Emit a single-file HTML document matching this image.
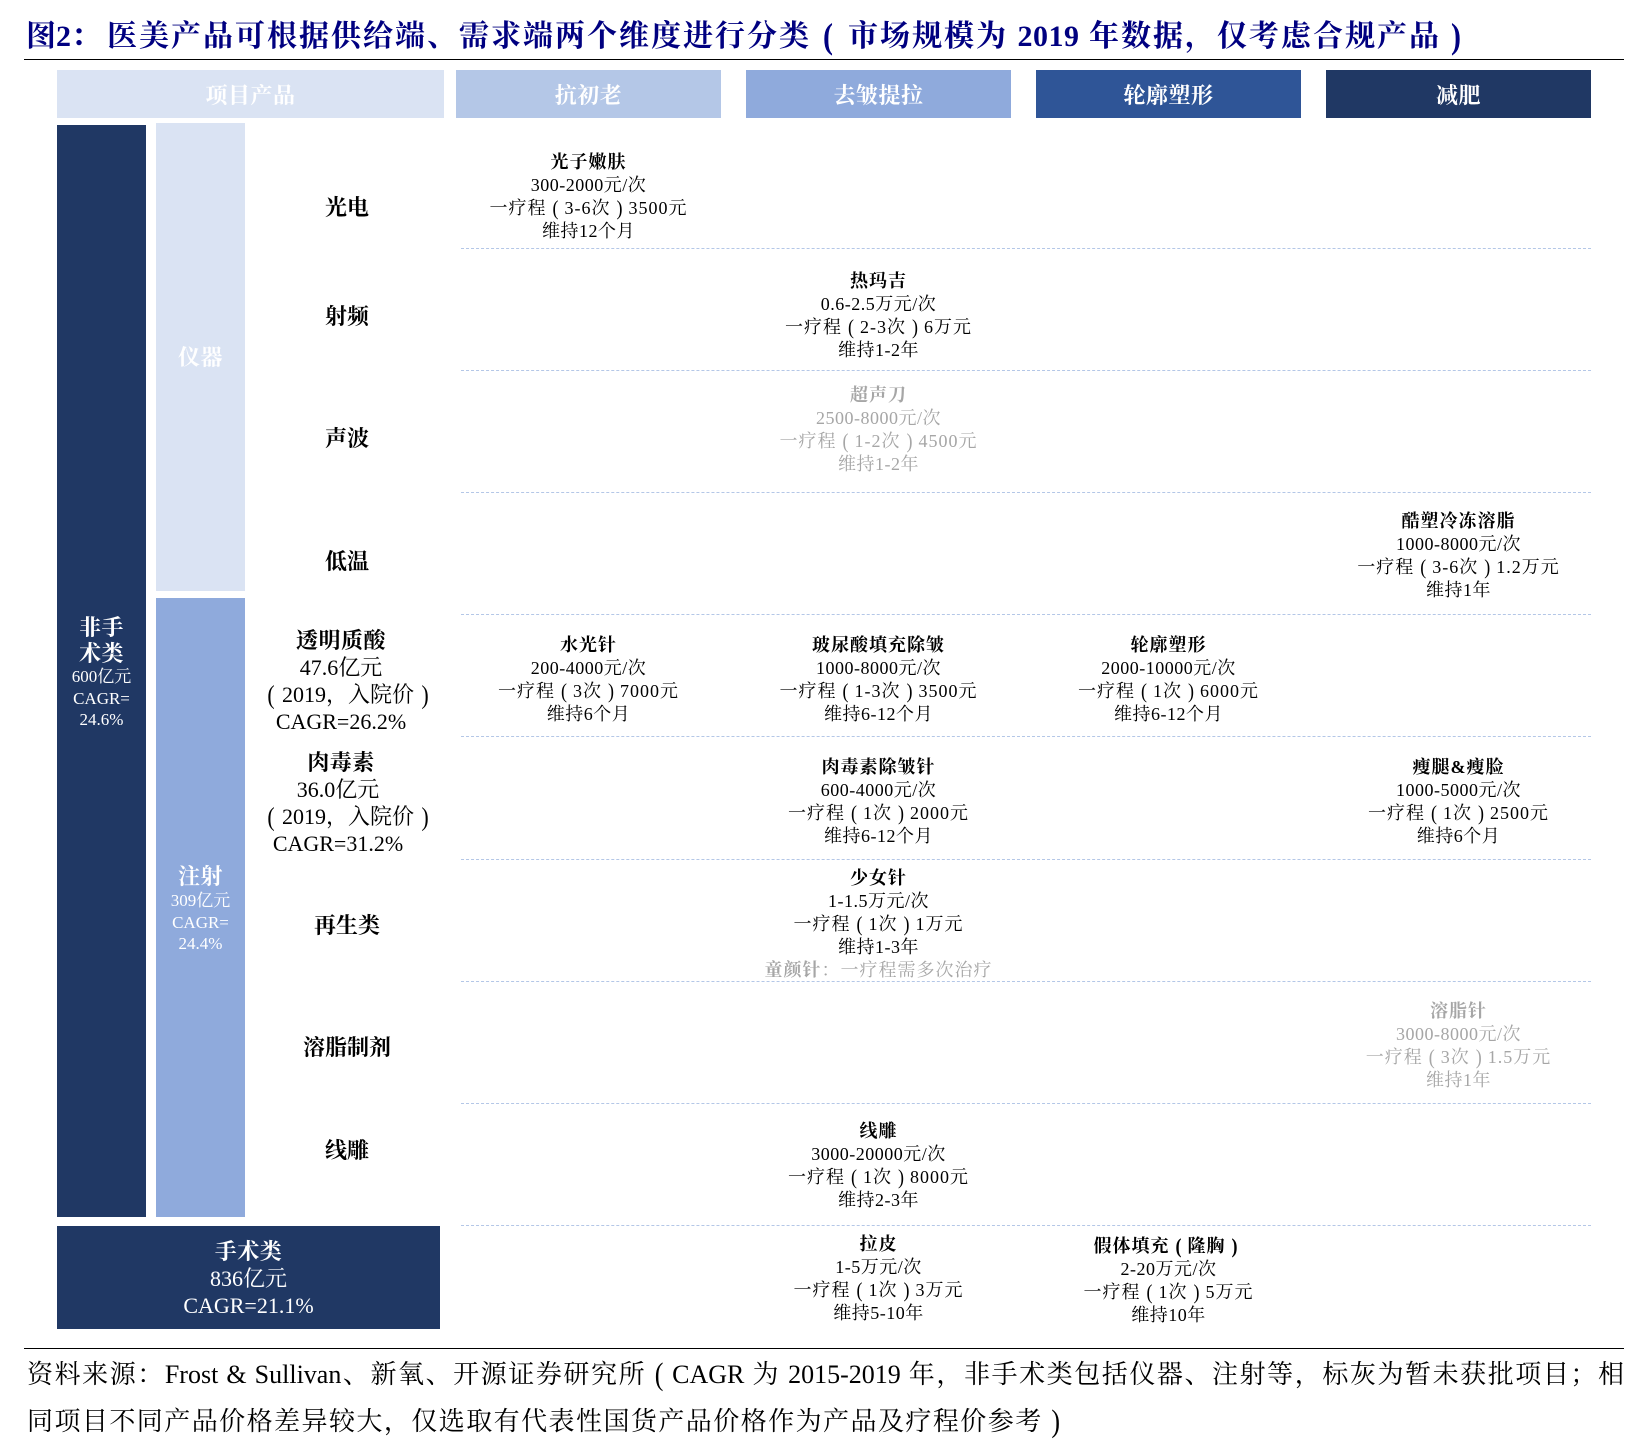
<!DOCTYPE html>
<html lang="zh-CN">
<head>
<meta charset="utf-8">
<title>医美产品分类</title>
<style>
html,body{margin:0;padding:0;background:#fff;}
#p{position:relative;width:1648px;height:1443px;overflow:hidden;background:#fff;color:#000;
font-family:"Liberation Serif","Noto Serif CJK SC",serif;}
#p div{position:absolute;}
.hd{top:72px;height:48px;line-height:48px;text-align:center;color:#fff;font-weight:bold;font-size:22px;letter-spacing:.5px;}
.dl{left:461px;width:1130px;height:0;border-top:1px dashed #B4C7E7;}
.c{width:265px;text-align:center;font-size:18px;line-height:23px;letter-spacing:.5px;white-space:nowrap;}
.c b{font-weight:bold;letter-spacing:1px;}
.c em{font-style:normal;letter-spacing:1px;}
.g{color:#A6A6A6;}
.l{left:247px;width:200px;text-align:center;font-size:22px;font-weight:bold;line-height:28px;white-space:nowrap;}
.k{text-align:center;white-space:nowrap;font-size:22px;line-height:27px;}
.k b{font-weight:bold;letter-spacing:.5px;}
.w{color:#fff;}
.s{font-size:17px;line-height:21.5px;}
.t{white-space:nowrap;}
i{font-style:normal;display:inline-block;width:1em;text-align:center;text-align-last:center;letter-spacing:0;transform:scaleY(1.2);}
.o{position:relative;}
</style>
</head>
<body>
<div id="p">
<div class="t" style="left:26px;top:17px;font-size:30px;line-height:40px;font-weight:bold;color:#000080;">图2：</div>
<div class="t" style="left:107px;top:17px;font-size:30px;line-height:40px;font-weight:bold;color:#000080;letter-spacing:2px;">医美产品可根据供给端、需求端两个维度进行分类<i style="margin-left:2px;margin-right:5px;">(</i>市场规模为 <span style="letter-spacing:.5px;">2019</span> 年数据，仅考虑合规产品<i>)</i></div>
<div style="left:24px;top:59px;width:1600px;height:1px;background:#000;"></div>

<div style="left:57px;top:70px;width:387px;height:48px;background:#DAE3F3;"></div>
<div style="left:456px;top:70px;width:265px;height:48px;background:#B4C7E7;"></div>
<div style="left:746px;top:70px;width:265px;height:48px;background:#8FAADC;"></div>
<div style="left:1036px;top:70px;width:265px;height:48px;background:#2F5597;"></div>
<div style="left:1326px;top:70px;width:265px;height:48px;background:#203864;"></div>
<div class="hd" style="left:57px;width:387px;">项目产品</div>
<div class="hd" style="left:456px;width:265px;">抗初老</div>
<div class="hd" style="left:746px;width:265px;">去皱提拉</div>
<div class="hd" style="left:1036px;width:265px;">轮廓塑形</div>
<div class="hd" style="left:1326px;width:265px;">减肥</div>

<div style="left:57px;top:125px;width:89px;height:1092px;background:#203864;"></div>
<div style="left:156px;top:123px;width:89px;height:468px;background:#DAE3F3;"></div>
<div style="left:156px;top:598px;width:89px;height:619px;background:#8FAADC;"></div>
<div style="left:57px;top:1226px;width:383px;height:103px;background:#203864;"></div>

<div class="k w" style="left:57px;width:89px;top:615px;line-height:26px;"><b>非手<br>术类</b></div>
<div class="k w s" style="left:57px;width:89px;top:666px;">600亿元<br>CAGR=<br>24.6%</div>
<div class="k w" style="left:156px;width:89px;top:344px;"><b>仪器</b></div>
<div class="k w" style="left:156px;width:89px;top:863px;"><b>注射</b></div>
<div class="k w s" style="left:156px;width:89px;top:890px;">309亿元<br>CAGR=<br>24.4%</div>
<div class="k w" style="left:57px;width:383px;top:1238px;"><b>手术类</b><br>836亿元<br>CAGR=21.1%</div>

<div class="dl" style="top:248px"></div>
<div class="dl" style="top:370px"></div>
<div class="dl" style="top:492px"></div>
<div class="dl" style="top:614px"></div>
<div class="dl" style="top:736px"></div>
<div class="dl" style="top:859px"></div>
<div class="dl" style="top:981px"></div>
<div class="dl" style="top:1103px"></div>
<div class="dl" style="top:1225px"></div>

<div class="l" style="top:194px">光电</div>
<div class="l" style="top:303px">射频</div>
<div class="l" style="top:425px">声波</div>
<div class="l" style="top:548px">低温</div>
<div class="k" style="left:241px;width:200px;top:627px;"><b>透明质酸</b><br>47.6亿元<br><span class="o" style="left:7px;"><i>(</i>2019，入院价<i>)</i></span><br>CAGR=26.2%</div>
<div class="k" style="left:241px;width:200px;top:749px;"><b>肉毒素</b><br><span class="o" style="left:-3px;">36.0亿元</span><br><span class="o" style="left:7px;"><i>(</i>2019，入院价<i>)</i></span><br><span class="o" style="left:-3px;">CAGR=31.2%</span></div>
<div class="l" style="top:912px">再生类</div>
<div class="l" style="top:1034px">溶脂制剂</div>
<div class="l" style="top:1137px">线雕</div>

<div class="c" style="left:456px;top:151px"><b>光子嫩肤</b><br>300-2000元/次<br><em>一疗程<i>(</i>3-6次<i>)</i>3500元</em><br>维持12个月</div>
<div class="c" style="left:746px;top:270px"><b>热玛吉</b><br>0.6-2.5万元/次<br><em>一疗程<i>(</i>2-3次<i>)</i>6万元</em><br>维持1-2年</div>
<div class="c g" style="left:746px;top:384px"><b>超声刀</b><br>2500-8000元/次<br><em>一疗程<i>(</i>1-2次<i>)</i>4500元</em><br>维持1-2年</div>
<div class="c" style="left:1326px;top:510px"><b>酷塑冷冻溶脂</b><br>1000-8000元/次<br><em>一疗程<i>(</i>3-6次<i>)</i>1.2万元</em><br>维持1年</div>

<div class="c" style="left:456px;top:634px"><b>水光针</b><br>200-4000元/次<br><em>一疗程<i>(</i>3次<i>)</i>7000元</em><br>维持6个月</div>
<div class="c" style="left:746px;top:634px"><b>玻尿酸填充除皱</b><br>1000-8000元/次<br><em>一疗程<i>(</i>1-3次<i>)</i>3500元</em><br>维持6-12个月</div>
<div class="c" style="left:1036px;top:634px"><b>轮廓塑形</b><br>2000-10000元/次<br><em>一疗程<i>(</i>1次<i>)</i>6000元</em><br>维持6-12个月</div>

<div class="c" style="left:746px;top:756px"><b>肉毒素除皱针</b><br>600-4000元/次<br><em>一疗程<i>(</i>1次<i>)</i>2000元</em><br>维持6-12个月</div>
<div class="c" style="left:1326px;top:756px"><b>瘦腿&amp;瘦脸</b><br>1000-5000元/次<br><em>一疗程<i>(</i>1次<i>)</i>2500元</em><br>维持6个月</div>

<div class="c" style="left:746px;top:867px"><b>少女针</b><br>1-1.5万元/次<br><em>一疗程<i>(</i>1次<i>)</i>1万元</em><br>维持1-3年<br><span class="g"><em><b>童颜针</b>：一疗程需多次治疗</em></span></div>
<div class="c g" style="left:1326px;top:1000px"><b>溶脂针</b><br>3000-8000元/次<br><em>一疗程<i>(</i>3次<i>)</i>1.5万元</em><br>维持1年</div>
<div class="c" style="left:746px;top:1120px"><b>线雕</b><br>3000-20000元/次<br><em>一疗程<i>(</i>1次<i>)</i>8000元</em><br>维持2-3年</div>
<div class="c" style="left:746px;top:1233px"><b>拉皮</b><br>1-5万元/次<br><em>一疗程<i>(</i>1次<i>)</i>3万元</em><br>维持5-10年</div>
<div class="c" style="left:1036px;top:1235px"><b>假体填充<i>(</i>隆胸<i>)</i></b><br>2-20万元/次<br><em>一疗程<i>(</i>1次<i>)</i>5万元</em><br>维持10年</div>

<div style="left:24px;top:1348px;width:1600px;height:1px;background:#000;"></div>
<div style="left:27px;top:1357px;width:1597px;font-size:26px;line-height:36px;text-align:justify;text-align-last:justify;white-space:nowrap;">资料来源：Frost &amp; Sullivan、新氧、开源证券研究所<i>(</i>CAGR 为 2015-2019 年，非手术类包括仪器、注射等，标灰为暂未获批项目；相</div>
<div class="t" style="left:27px;top:1404px;font-size:26px;line-height:36px;letter-spacing:1.45px;">同项目不同产品价格差异较大，仅选取有代表性国货产品价格作为产品及疗程价参考<i>)</i></div>
</div>
</body>
</html>
